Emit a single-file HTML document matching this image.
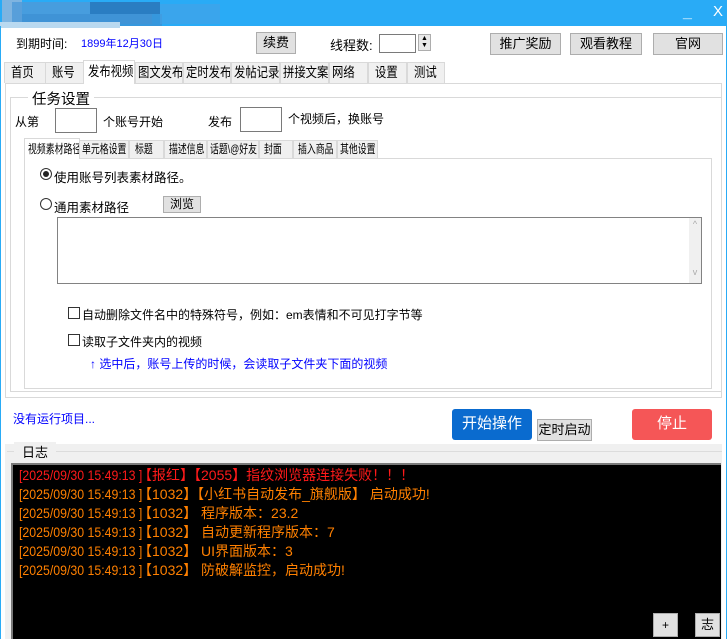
<!DOCTYPE html>
<html><head><meta charset="utf-8"><style>
*{margin:0;padding:0;box-sizing:border-box}
body{width:727px;height:639px;position:relative;background:#fff;font-family:"Liberation Sans","Noto Sans CJK SC",sans-serif;font-size:12px;color:#000;overflow:hidden;white-space:nowrap}
.a{position:absolute}
.btn{position:absolute;background:#e1e1e1;border:1px solid #adadad;text-align:center;font-size:13px}
.tab{position:absolute;top:62px;height:21px;background:#f0f0f0;border:1px solid #d9d9d9;border-bottom:none;font-size:13.5px;padding-left:2px;line-height:20px;overflow:hidden}
.tab span,.itab span{display:inline-block;transform:scaleX(0.84);transform-origin:left}
.itab{position:absolute;top:140px;height:18px;background:#f0f0f0;border:1px solid #d9d9d9;border-bottom:none;font-size:12px;padding-left:2px;line-height:17px;overflow:hidden}
.itab span{transform:scaleX(0.74)}
.log div{height:19px;line-height:19px;font-size:14px;white-space:nowrap}
.ts{display:inline-block;width:119px;overflow:visible}
.ts span{display:inline-block;transform:scaleX(0.88);transform-origin:left}
</style></head><body>
<div class="a" style="left:0;top:0;width:727px;height:26px;background:#29abf6"></div>
<div class="a" style="left:2px;top:0;width:20px;height:26px;background:#7fb4e0"></div>
<div class="a" style="left:12px;top:2px;width:140px;height:22px;background:#4f9ad8;opacity:.8"></div>
<div class="a" style="left:90px;top:2px;width:70px;height:12px;background:#2a7dc2"></div>
<div class="a" style="left:22px;top:14px;width:140px;height:12px;background:#3c8fd3;opacity:.7"></div>
<div class="a" style="left:0;top:22px;width:120px;height:6px;background:#b9d9f0"></div>
<div class="a" style="left:160px;top:4px;width:60px;height:20px;background:#46a2e6;opacity:.6"></div>
<div class="a" style="left:683px;top:4px;color:#fff;font-size:16px;font-weight:bold">_</div>
<div class="a" style="left:713px;top:3px;color:#fff;font-size:15px">X</div>
<div class="a" style="left:0;top:26px;width:1px;height:613px;background:#29abf6"></div>
<div class="a" style="left:726px;top:26px;width:1px;height:613px;background:#29abf6"></div>
<div class="a" style="left:16px;top:35px;font-size:12px">到期时间:</div>
<div class="a" style="left:81px;top:35px;font-size:11px;color:#0000ff">1899年12月30日</div>
<div class="btn" style="left:256px;top:32px;width:40px;height:22px;line-height:20px">续费</div>
<div class="a" style="left:330px;top:35px;font-size:13px">线程数:</div>
<div class="a" style="left:379px;top:34px;width:37px;height:19px;border:1px solid #7a7a7a;background:#fff"></div>
<div class="a" style="left:418px;top:34px;width:13px;height:17px;border:1px solid #adadad;background:#e8e8e8;font-size:7px;line-height:7px;text-align:center">▲<br>▼</div>
<div class="btn" style="left:490px;top:33px;width:71px;height:22px;line-height:20px">推广奖励</div>
<div class="btn" style="left:570px;top:33px;width:72px;height:22px;line-height:20px">观看教程</div>
<div class="btn" style="left:653px;top:33px;width:70px;height:22px;line-height:20px">官网</div>
<div class="tab" style="left:4px;width:42px;padding-left:6px"><span>首页</span></div>
<div class="tab" style="left:45px;width:39px;padding-left:6px"><span>账号</span></div>
<div class="tab" style="left:83px;top:60px;height:24px;width:52px;background:#fff;z-index:2;padding-left:4px;line-height:22px"><span>发布视频</span></div>
<div class="tab" style="left:135px;width:48px"><span>图文发布</span></div>
<div class="tab" style="left:183px;width:48px"><span>定时发布</span></div>
<div class="tab" style="left:231px;width:49px"><span>发帖记录</span></div>
<div class="tab" style="left:280px;width:49px"><span>拼接文案</span></div>
<div class="tab" style="left:329px;width:39px"><span>网络</span></div>
<div class="tab" style="left:368px;width:39px;padding-left:6px"><span>设置</span></div>
<div class="tab" style="left:407px;width:38px;padding-left:6px"><span>测试</span></div>
<div class="a" style="left:5px;top:83px;width:717px;height:315px;border:1px solid #d9d9d9;background:#fff"></div>
<div class="a" style="left:10px;top:97px;width:712px;height:1px;background:#d9d9d9"></div>
<div class="a" style="left:10px;top:97px;width:1px;height:295px;background:#d9d9d9"></div>
<div class="a" style="left:10px;top:391px;width:711px;height:1px;background:#d9d9d9"></div>
<div class="a" style="left:28px;top:88px;background:#fff;padding:0 4px;font-size:14.5px">任务设置</div>
<div class="a" style="left:15px;top:113px;font-size:12px">从第</div>
<div class="a" style="left:55px;top:108px;width:42px;height:25px;border:1px solid #7a7a7a"></div>
<div class="a" style="left:103px;top:113px;font-size:12px">个账号开始</div>
<div class="a" style="left:208px;top:113px;font-size:12px">发布</div>
<div class="a" style="left:240px;top:107px;width:42px;height:25px;border:1px solid #7a7a7a"></div>
<div class="a" style="left:288px;top:110px;font-size:12px">个视频后，换账号</div>
<div class="itab" style="left:79px;width:50px"><span>单元格设置</span></div>
<div class="itab" style="left:129px;width:35px;padding-left:5px"><span>标题</span></div>
<div class="itab" style="left:164px;width:43px;padding-left:4px"><span>描述信息</span></div>
<div class="itab" style="left:207px;width:52px;padding-left:2px"><span>话题\@好友</span></div>
<div class="itab" style="left:259px;width:34px;padding-left:4px"><span>封面</span></div>
<div class="itab" style="left:293px;width:44px;padding-left:4px"><span>插入商品</span></div>
<div class="itab" style="left:337px;width:41px;padding-left:2px"><span>其他设置</span></div>
<div class="a" style="left:24px;top:158px;width:688px;height:231px;border:1px solid #d9d9d9;background:#fff"></div>
<div class="itab" style="left:24px;top:138px;height:21px;width:56px;background:#fff;z-index:2;line-height:20px;padding-left:3px"><span>视频素材路径</span></div>
<div class="a" style="left:40px;top:168px;width:12px;height:12px;border:1px solid #333;border-radius:50%"><div style="margin:2px;width:6px;height:6px;border-radius:50%;background:#222"></div></div>
<div class="a" style="left:54px;top:167px;font-size:12.5px">使用账号列表素材路径。</div>
<div class="a" style="left:40px;top:198px;width:12px;height:12px;border:1px solid #333;border-radius:50%"></div>
<div class="a" style="left:54px;top:197px;font-size:12.5px">通用素材路径</div>
<div class="btn" style="left:163px;top:196px;width:38px;height:17px;line-height:15px;font-size:12px">浏览</div>
<div class="a" style="left:57px;top:217px;width:645px;height:67px;border:1px solid #828282"></div>
<div class="a" style="left:689px;top:218px;width:12px;height:65px;background:#f0f0f0;color:#aaa;font-size:9px;text-align:center;line-height:12px">^<br><br><br><br>v</div>
<div class="a" style="left:68px;top:307px;width:12px;height:12px;border:1px solid #333"></div>
<div class="a" style="left:82px;top:306px;font-size:12px">自动删除文件名中的特殊符号，例如：em表情和不可见打字节等</div>
<div class="a" style="left:68px;top:334px;width:12px;height:12px;border:1px solid #333"></div>
<div class="a" style="left:82px;top:333px;font-size:12px">读取子文件夹内的视频</div>
<div class="a" style="left:90px;top:355px;font-size:12px;color:#0000ff">↑ 选中后，账号上传的时候，会读取子文件夹下面的视频</div>
<div class="a" style="left:13px;top:410px;font-size:12px;color:#0000ff">没有运行项目...</div>
<div class="a" style="left:452px;top:409px;width:80px;height:31px;background:#0a6bcf;border-radius:3px;color:#fff;font-size:15px;text-align:center;line-height:29px">开始操作</div>
<div class="btn" style="left:537px;top:419px;width:55px;height:22px;line-height:20px;font-size:13px">定时启动</div>
<div class="a" style="left:632px;top:409px;width:80px;height:31px;background:#f55657;border-radius:3px;color:#fff;font-size:15px;text-align:center;line-height:29px">停止</div>
<div class="a" style="left:5px;top:444px;width:717px;height:195px;background:#f0f0f0"></div>
<div class="a" style="left:7px;top:451px;width:715px;height:1px;background:#dcdcdc"></div>
<div class="a" style="left:14px;top:442px;background:#f0f0f0;padding:0 8px;font-size:13px">日志</div>
<div class="a log" style="left:11px;top:463px;width:710px;height:176px;background:#000;border-top:2px solid #7a7a7a;border-left:2px solid #7a7a7a;padding:1px 0 0 6px">
<div style="color:#ff1a1a"><span class="ts"><span>[2025/09/30 15:49:13 ]</span></span>【报红】【2055】指纹浏览器连接失败！！！</div>
<div style="color:#ff8000"><span class="ts"><span>[2025/09/30 15:49:13 ]</span></span>【1032】【小红书自动发布_旗舰版】 启动成功!</div>
<div style="color:#ff8000"><span class="ts"><span>[2025/09/30 15:49:13 ]</span></span>【1032】 程序版本：23.2</div>
<div style="color:#ff8000"><span class="ts"><span>[2025/09/30 15:49:13 ]</span></span>【1032】 自动更新程序版本：7</div>
<div style="color:#ff8000"><span class="ts"><span>[2025/09/30 15:49:13 ]</span></span>【1032】 UI界面版本：3</div>
<div style="color:#ff8000"><span class="ts"><span>[2025/09/30 15:49:13 ]</span></span>【1032】 防破解监控，启动成功!</div>
</div>
<div class="btn" style="left:653px;top:613px;width:25px;height:24px;line-height:22px;font-size:12px">+</div>
<div class="btn" style="left:695px;top:613px;width:25px;height:24px;line-height:22px;font-size:13px">志</div>
</body></html>
